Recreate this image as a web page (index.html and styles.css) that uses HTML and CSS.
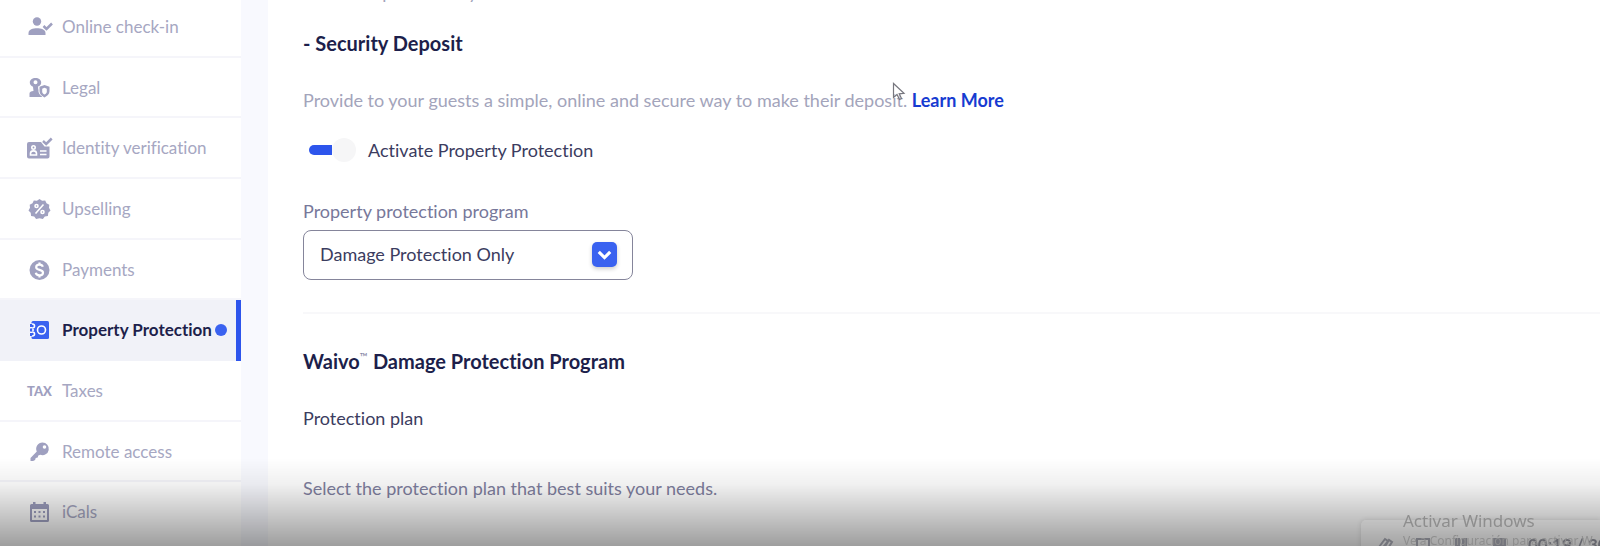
FILE: index.html
```html
<!DOCTYPE html>
<html lang="en">
  <head>
    <meta charset="UTF-8" />
    <meta name="viewport" content="width=device-width, initial-scale=1.0" />
    <title>Property Protection</title>
    <link rel="stylesheet" href="styles.css">
  </head>
  <body>
    <div class="page">
      <nav class="sidebar">
        <a class="nav-item" href="#checkin">
          <svg class="icon" viewBox="0 0 26 24">
            <circle cx="10" cy="6.500" r="4.200" />
            <path d="M1.500 20v-2c0-3.300 4.500-4.700 8.500-4.700s8.500 1.400 8.500 4.700v2z" />
            <path class="stroke" d="M16.500 11l3 3 5.500-5.500" />
          </svg>
          <span>Online check-in</span>
        </a>
        <a class="nav-item" href="#legal">
          <svg class="icon" viewBox="0 0 26 24">
            <path fill-rule="evenodd" d="M8.500 2c3.300 0 5.700 2 5.700 4.500 0 2-1.200 3.400-3 4.200l.3 2.800h3.500v7.500H2.500v-3.500c0-1.500 1.500-2.500 4-2.500l-.5-4.300C4.100 9.900 2.800 8.500 2.800 6.500 2.800 4 5.200 2 8.500 2zm0 2.300a2 2 0 1 0 0 4 2 2 0 0 0 0-4z" />
            <path class="cutout" d="M17.500 8l6 2.200v5c0 3-3 5.300-6 6.800-3-1.500-6-3.800-6-6.800v-5z" />
            <path fill-rule="evenodd" d="M17.500 9l5 1.800v4.400c0 2.800-2.400 4.800-5 6.300-2.600-1.500-5-3.500-5-6.300v-4.400zm0 2.700l-2.300 1v3c0 1 .8 2 2.300 2.800 1.500-.8 2.300-1.800 2.300-2.800v-3z" />
          </svg>
          <span>Legal</span>
        </a>
        <a class="nav-item" href="#identity">
          <svg class="icon" viewBox="0 0 26 24">
            <path d="M2 6h12l3.500 4.500h5v10a2 2 0 0 1-2 2H2a2 2 0 0 1-2-2V8a2 2 0 0 1 2-2z" />
            <g class="lines">
              <circle cx="6.500" cy="11.500" r="1.700" />
              <path d="M3.500 19v-1.500c0-3.500 6-3.500 6 0V19zM13 15h6.500M13 18.500h6.500" />
            </g>
            <path class="stroke" d="M16 5l3.200 3 5.500-5.500" />
          </svg>
          <span>Identity verification</span>
        </a>
        <a class="nav-item" href="#upselling">
          <svg class="icon" viewBox="0 0 26 24">
            <path d="M12.500 2l2.600 1.800 3.100-.4 1.300 2.900 2.800 1.400-.3 3.100 1.500 2.700-2.200 2.300-.4 3.100-3.100.7-1.900 2.500-3.400-.8-3.400.8-1.900-2.500-3.100-.7-.4-3.100-2.200-2.300L3 10.800l-.3-3.100 2.800-1.400 1.300-2.900 3.100.4z" />
            <g class="lines">
              <circle cx="9.500" cy="9" r="1.500" />
              <circle cx="15.500" cy="15" r="1.500" />
              <path d="M16.500 7.500l-8 9" />
            </g>
          </svg>
          <span>Upselling</span>
        </a>
        <a class="nav-item" href="#payments">
          <svg class="icon" viewBox="0 0 26 24">
            <circle cx="12.500" cy="12" r="10" />
            <path class="dollar" d="M15.800 8.800c-.4-1.500-1.600-2.100-3.300-2.100-2 0-3.300 1-3.300 2.500 0 3.600 6.800 1.800 6.800 5.500 0 1.600-1.500 2.600-3.500 2.600s-3.400-.9-3.700-2.500M12.500 4.500v2M12.500 17.500v2" />
          </svg>
          <span>Payments</span>
        </a>
        <a class="nav-item active" href="#protection" aria-current="page">
          <svg class="icon" viewBox="0 0 26 24">
            <path d="M6 3h14.500a1.500 1.500 0 0 1 1.500 1.500v15a1.500 1.500 0 0 1-1.500 1.500H6a1.500 1.500 0 0 1-1.500-1.500v-15A1.500 1.500 0 0 1 6 3z" />
            <g class="lines">
              <circle cx="14.500" cy="12" r="4" />
              <circle cx="5.500" cy="8" r="2" />
              <circle cx="5.500" cy="16" r="2" />
              <path d="M3 12h4" />
            </g>
            <path d="M3 6h2v3H3zM3 10.500h2v3H3zM3 15h2v3H3z" />
          </svg>
          <span>Property Protection</span>
          <i class="dot"></i>
        </a>
        <a class="nav-item" href="#taxes">
          <b class="icon tax">TAX</b>
          <span>Taxes</span>
        </a>
        <a class="nav-item" href="#remote">
          <svg class="icon" viewBox="0 0 26 24">
            <path fill-rule="evenodd" d="M15.500 2.500a6.300 6.300 0 1 1-2.200 12.200l-2 .8-.6 2-2 .5-.6 2-2 1H3.500V18l6.300-6.400A6.300 6.300 0 0 1 15.500 2.500zm2 2.700a1.800 1.800 0 1 0 0 3.600 1.800 1.800 0 0 0 0-3.600z" />
          </svg>
          <span>Remote access</span>
        </a>
        <a class="nav-item" href="#icals">
          <svg class="icon" viewBox="0 0 26 24">
            <path fill-rule="evenodd" d="M6 2h2.500v2h8V2H19v2h1.500A1.500 1.500 0 0 1 22 5.500v15a1.500 1.500 0 0 1-1.500 1.500h-16A1.500 1.500 0 0 1 3 20.500v-15A1.500 1.500 0 0 1 4.500 4H6zM5 9v11h15V9z" />
            <path d="M7 11h2v2H7zM11.500 11h2v2h-2zM16 11h2v2h-2zM7 15.500h2v2H7zM11.500 15.500h2v2h-2zM16 15.500h2v2h-2z" />
          </svg>
          <span>iCals</span>
        </a>
      </nav>

      <main class="content">
        <p class="muted intro">Collect deposits easily</p>
        <h2>- Security Deposit</h2>
        <p class="muted">
          Provide to your guests a simple, online and secure way to make their deposit.
          <a class="learn-more" href="#learn">Learn More</a>
        </p>

        <label class="toggle">
          <input type="checkbox" checked />
          <span>Activate Property Protection</span>
        </label>

        <div class="form-group">
          <label for="program">Property protection program</label>
          <div class="select">
            <select id="program">
              <option>Damage Protection Only</option>
            </select>
            <svg class="chevron" viewBox="0 0 24 24">
              <path d="M6.500 9.500l5.500 5.500 5.500-5.500" />
            </svg>
          </div>
        </div>

        <hr />

        <h2>Waivo<sup>™</sup> Damage Protection Program</h2>
        <h3>Protection plan</h3>
        <p class="note">Select the protection plan that best suits your needs.</p>
      </main>
    </div>

    <svg class="cursor" viewBox="0 0 14 20">
      <path d="M1.500 1.500v14l3.500-3 2.500 5 2-1-2.300-4.700 4.800-.5z" />
    </svg>

    <div class="shade"></div>

    <div class="recorder">
      <svg class="tool" viewBox="0 0 20 20">
        <path d="M3 12l6-8 3 2-7 9M8 13l5-8 3 2-5 8" />
      </svg>
      <svg class="tool" viewBox="0 0 20 20">
        <path d="M3 4h12v12H3z" />
      </svg>
      <svg class="tool solid" viewBox="0 0 20 20">
        <path d="M3 3h5v14H3zM10 3h5v14h-5z" />
      </svg>
      <svg class="tool solid" viewBox="0 0 20 20">
        <path d="M3 3h13v13H3z" />
      </svg>
      <span class="time">00:19 / 30</span>
    </div>

    <div class="watermark">
      <strong>Activar Windows</strong>
      <span>Ve a Configuración para activar W</span>
    </div>
  </body>
</html>
```
FILE: styles.css
```css
* {
  margin: 0;
  padding: 0;
  box-sizing: border-box;
}

body {
  font-family: Lato, "Open Sans", sans-serif;
  font-size: 18px;
  font-variant-ligatures: none;
  line-height: 24px;
  color: #1d1f4b;
  background: #f8f9fe;
  height: 100vh;
  overflow: hidden;
}

.page {
  display: flex;
  gap: 27px;
  min-height: 100vh;
}

/* Sidebar */
.sidebar {
  display: flex;
  flex-direction: column;
  flex: 0 0 241px;
  height: calc(100vh + 3px);
  margin-top: -3px;
  padding-bottom: 3px;
  background: #fff;
  font-size: 17px;
}

.nav-item {
  display: flex;
  align-items: center;
  flex: 1;
  padding-top: 1px;
  padding-left: 27px;
  border-bottom: 2px solid #f5f5fa;
  color: #a6a7c2;
  text-decoration: none;
  white-space: nowrap;
}

.nav-item:last-child {
  border-bottom-color: transparent;
}

.icon {
  width: 26px;
  height: 24px;
  margin-right: 9px;
  flex: none;
  fill: #9fa0c0;
}

.icon .stroke {
  fill: none;
  stroke: #9fa0c0;
  stroke-width: 2.5;
}

.icon .cutout {
  fill: #fff;
}

.icon .lines,
.icon .dollar {
  fill: none;
  stroke: #fff;
  stroke-width: 1.6;
}

.icon .dollar {
  stroke-width: 2.2;
}

.tax {
  color: #9fa0c0;
  font-size: 13px;
  font-weight: 900;
}

.nav-item.active {
  background: #f1f2f8;
  box-shadow: inset -5px 0 #2d55ec;
  border-bottom-width: 0;
  padding-bottom: 2px;
  color: #1d1f4b;
  font-weight: 700;
}

.active .icon {
  fill: #3a62f0;
}

.dot {
  width: 12px;
  height: 12px;
  margin-left: 3px;
  border-radius: 50%;
  background: #3a62f0;
}

/* Content */
.content {
  flex: 1;
  padding-left: 35px;
  background: #fff;
}

.intro {
  margin-top: -20px;
  margin-bottom: 26px;
}

h2 {
  font-size: 20px;
  line-height: 26px;
  font-weight: 700;
  margin-bottom: 32px;
}

h2 sup {
  font-size: 11px;
  font-weight: 400;
  line-height: 0;
  color: #8788a5;
}

.muted {
  color: #a3a4bb;
}

.learn-more {
  color: #173bd1;
  font-weight: 700;
  text-decoration: none;
}

.toggle {
  display: flex;
  align-items: center;
  gap: 12px;
  margin-top: 26px;
  color: #3b3c60;
}

.toggle input {
  appearance: none;
  display: flex;
  align-items: center;
  justify-content: flex-end;
  position: relative;
  width: 47px;
  height: 24px;
  margin-left: 6px;
}

.toggle input::before {
  content: "";
  flex: 1;
  height: 10px;
  border-radius: 5px 0 0 5px;
  background: #2d55ec;
}

.toggle input::after {
  content: "";
  width: 24px;
  height: 24px;
  border-radius: 50%;
  background: #f6f6f7;
}

.form-group {
  display: flex;
  flex-direction: column;
  gap: 7px;
  margin-top: 37px;
  color: #77789a;
}

.select {
  position: relative;
  width: 330px;
}

.select select {
  appearance: none;
  width: 100%;
  height: 50px;
  padding: 0 48px 2px 16px;
  border: 1px solid #85859b;
  border-radius: 8px;
  background: #fff;
  color: #3b3c60;
  font: inherit;
}

.chevron {
  position: absolute;
  top: 12px;
  right: 16px;
  width: 25px;
  height: 25px;
  border-radius: 5px;
  background: #3a62f0;
  box-shadow: 0 2px 4px rgba(0, 0, 0, 0.2);
  fill: none;
  stroke: #fff;
  stroke-width: 3;
  pointer-events: none;
}

hr {
  margin: 32px 0 34px;
  border: none;
  border-top: 2px solid #f8f8fa;
}

h3 {
  font-size: 18px;
  font-weight: 400;
  color: #3b3c60;
  margin-bottom: 46px;
}

.note {
  color: #7f80a0;
}

/* Things lying over the page */
.cursor {
  position: absolute;
  top: 82px;
  left: 892px;
  width: 14px;
  height: 20px;
  fill: #fff;
  fill-opacity: 0.5;
  stroke: #77777f;
  stroke-width: 1.2;
}

.shade {
  position: fixed;
  bottom: 0;
  width: 100%;
  height: 88px;
  background: linear-gradient(rgba(0, 0, 0, 0), rgba(0, 0, 0, 0.06) 30%, rgba(0, 0, 0, 0.38));
  pointer-events: none;
}

.recorder {
  position: fixed;
  right: 0;
  bottom: -16px;
  display: flex;
  align-items: center;
  gap: 18px;
  width: 239px;
  height: 42px;
  padding-top: 8px;
  padding-left: 15px;
  border-radius: 5px 0 0 0;
  background: rgba(255, 255, 255, 0.06);
  box-shadow: 0 0 5px rgba(0, 0, 0, 0.12);
  white-space: nowrap;
  overflow: hidden;
}

.tool {
  width: 20px;
  height: 20px;
  flex: none;
  fill: none;
  stroke: #74757c;
  stroke-width: 2;
}

.tool.solid {
  fill: #74757c;
  stroke: none;
}

.time {
  color: #66676e;
  font-size: 17px;
  font-weight: 700;
}

.watermark {
  position: fixed;
  right: 0;
  bottom: -4px;
  width: 197px;
  overflow: hidden;
  color: #8e8e8e;
  font-family: "Noto Sans", "Open Sans", sans-serif;
  white-space: nowrap;
}

.watermark strong {
  display: block;
  font-size: 17px;
  font-weight: 400;
  line-height: 22px;
}

.watermark span {
  display: block;
  font-size: 12px;
  line-height: 18px;
}
```
